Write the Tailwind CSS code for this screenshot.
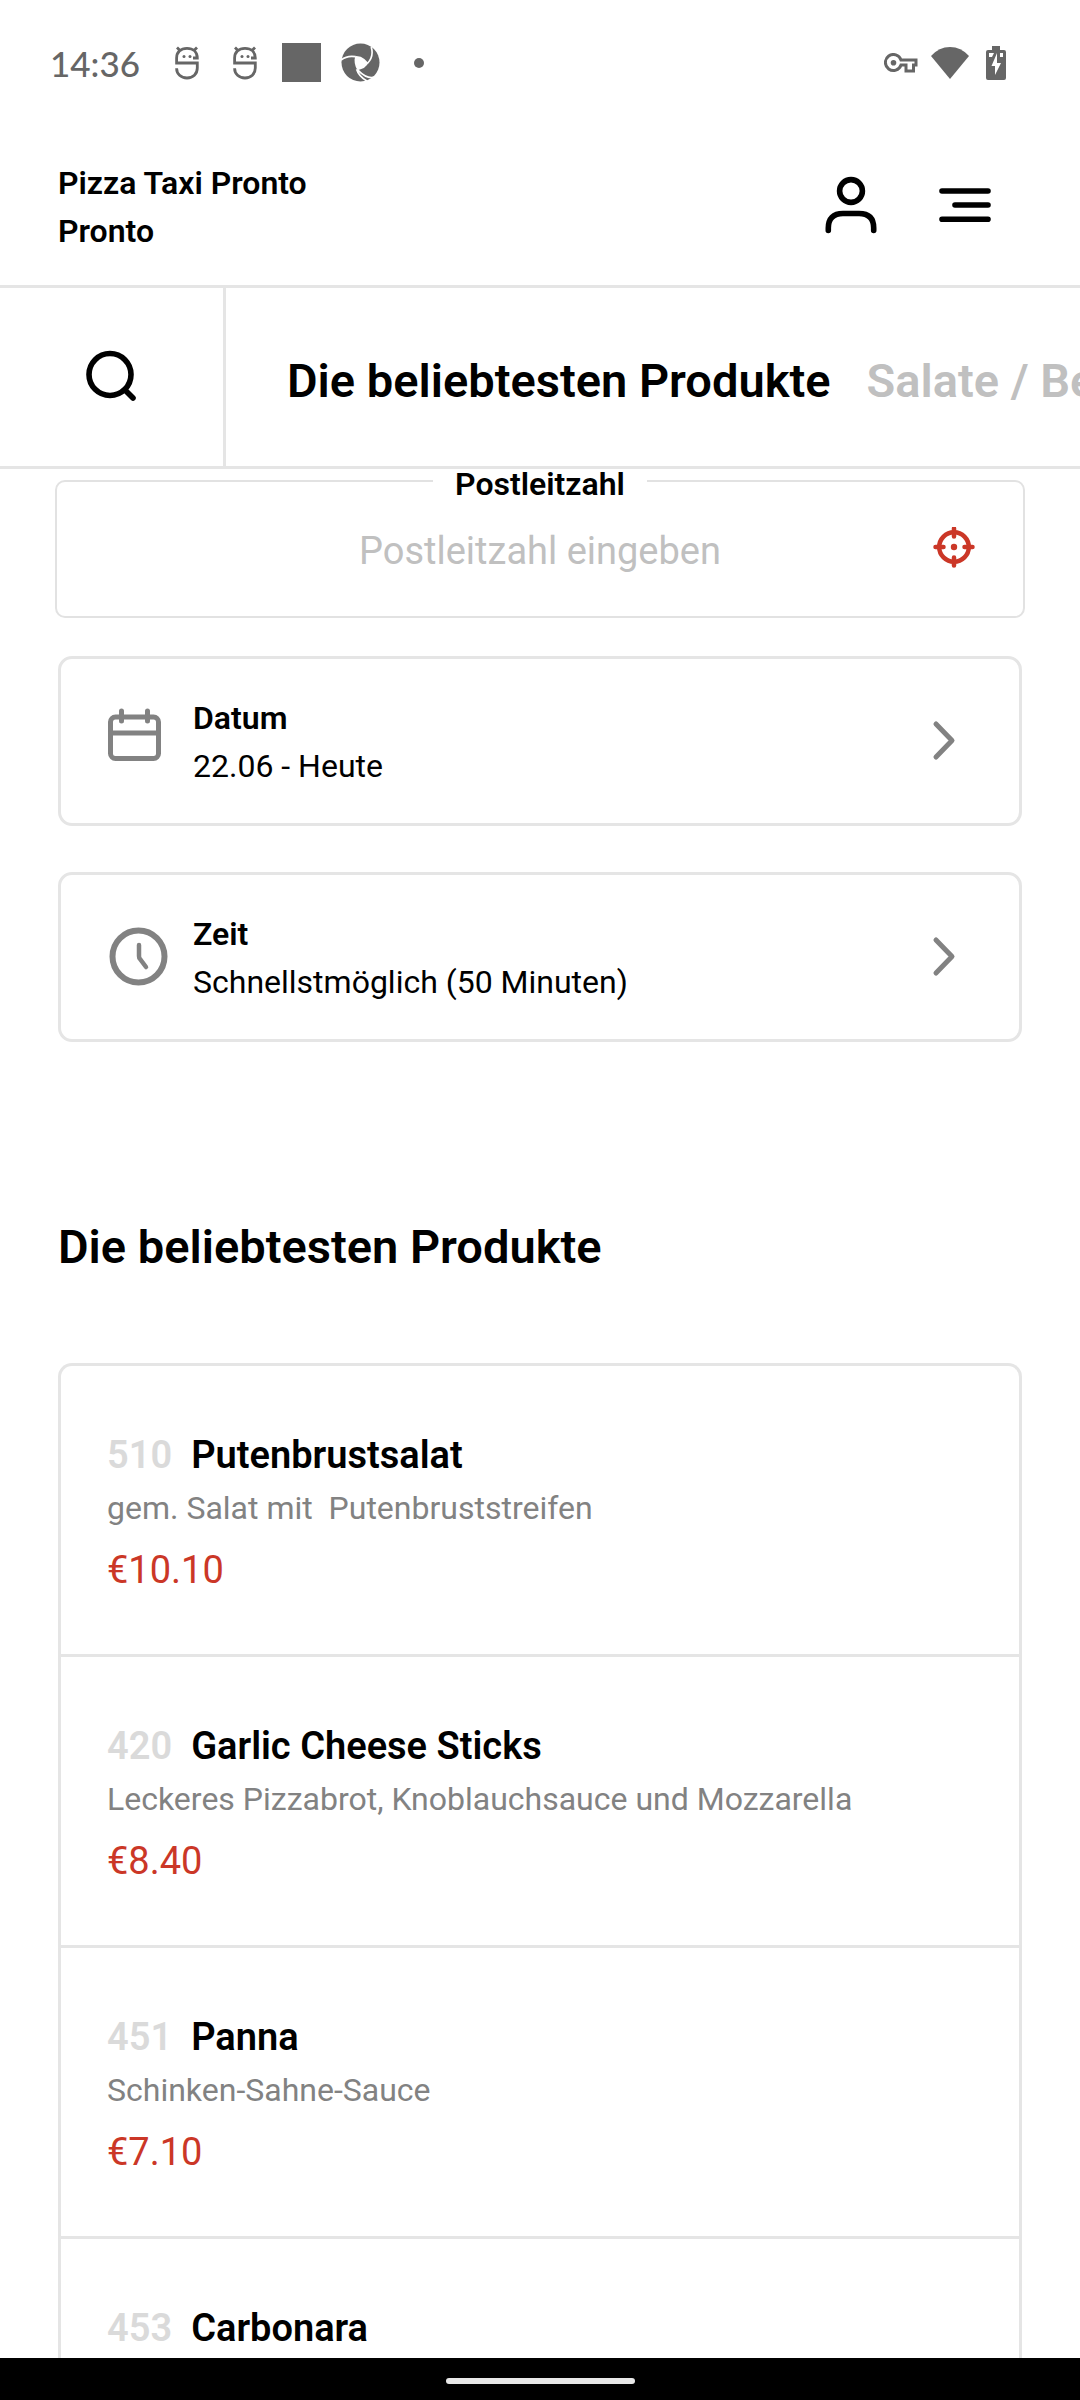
<!DOCTYPE html>
<html lang="de">
<head>
  <meta charset="UTF-8" />
  <meta name="viewport" content="width=device-width, initial-scale=1" />
  <title>Pizza Taxi Pronto</title>
  <script src="https://cdn.jsdelivr.net/npm/@tailwindcss/browser@4"></script>
</head>
<body class="flex h-screen flex-col bg-white font-['Roboto',sans-serif] text-[32px] leading-[48px] text-black">

  <!-- Status bar -->
  <div class="flex h-[125px] shrink-0 items-center justify-between pr-[66px] pl-[50px] text-[#666]">
    <div class="flex items-center">
      <span class="font-['Lato',sans-serif] text-[35px] font-medium">14:36</span>
      <svg class="ml-[34px] h-9 w-7" viewBox="0 0 28 36" fill="none" stroke="currentColor" stroke-width="2.800">
        <path d="M19 13h4.300c0-6-4-9.700-10.300-9.700S2.600 7 2.600 13v5h20.700v5c0 6-4.300 10-10.300 10S2.600 29 2.600 23.300M3 2.500l3 3M23 2.500l-3 3" />
        <circle cx="10" cy="11.500" r="1.500" fill="currentColor" stroke="none" /><circle cx="16" cy="11.500" r="1.500" fill="currentColor" stroke="none" />
      </svg>
      <svg class="ml-[30px] h-9 w-7" viewBox="0 0 28 36" fill="none" stroke="currentColor" stroke-width="2.800">
        <path d="M19 13h4.300c0-6-4-9.700-10.300-9.700S2.600 7 2.600 13v5h20.700v5c0 6-4.300 10-10.300 10S2.600 29 2.600 23.300M3 2.500l3 3M23 2.500l-3 3" />
        <circle cx="10" cy="11.500" r="1.500" fill="currentColor" stroke="none" /><circle cx="16" cy="11.500" r="1.500" fill="currentColor" stroke="none" />
      </svg>
      <span class="ml-[22px] size-[39px] bg-[#666]"></span>
      <svg class="ml-5 size-[39px]" viewBox="0 0 40 40">
        <circle cx="20" cy="20" r="19.500" fill="currentColor" />
        <path d="M14.500 13.500Q20 13 24 16.500L28 20.500Q25.500 26 17 28Q12.500 21 14.500 13.500z" fill="#fff" />
        <path d="M0 17.500Q6 12.500 15 14M31 4q3 10-4 17M16 27q2 7 10.500 12M17 27.500q12 12 20 6" fill="none" stroke="#fff" stroke-width="1.700" />
      </svg>
      <span class="ml-[34px] size-[10px] rounded-full bg-[#666]"></span>
    </div>
    <div class="flex items-center gap-3">
      <svg class="h-5 w-[34px]" viewBox="0 0 34 20" fill="none" stroke="currentColor" stroke-width="3">
        <path d="M17 7H32v5h-2.500v6H22v-6h-5A8 8 0 1 1 17 7z" />
        <circle cx="9.500" cy="9.700" r="2.800" fill="currentColor" stroke="none" />
      </svg>
      <svg class="h-8 w-10" viewBox="0 0 40 32" fill="currentColor"><path d="M1 9Q9 0 20 0t19 9L20 32z" /></svg>
      <svg class="h-[34px] w-8" viewBox="0 0 32 34">
        <path d="M10 0h8v4h4q2 0 2 2v26q0 2-2 2H6q-2 0-2-2V6q0-2 2-2h4z" fill="currentColor" />
        <path d="M15 7v10h4l-6 12v-9H9.500zM7 7h5l-2 4H7zM18 7h3v4h-3z" fill="#fff" />
      </svg>
    </div>
  </div>

  <header class="flex shrink-0 items-center justify-between border-b-3 border-[#e5e5e5] pt-8 pr-[83px] pb-[30px] pl-[58px]">
    <h1 class="pt-[2px] font-semibold">Pizza Taxi Pronto<br />Pronto</h1>
    <div class="flex items-center gap-[50px]">
      <button type="button" aria-label="Konto">
        <svg class="size-16" viewBox="0 0 64 64" fill="none" stroke="currentColor" stroke-width="5.600" stroke-linecap="round">
          <circle cx="32" cy="17" r="11.400" />
          <path d="M9.300 56.500v-2.500Q9.300 39.500 24 39.500h16q14.700 0 14.700 14.500v2.500" />
        </svg>
      </button>
      <button type="button" aria-label="Menü">
        <svg class="size-16" viewBox="0 0 64 64" fill="none" stroke="currentColor" stroke-width="5.600" stroke-linecap="round">
          <path d="M9 17h46M22 31h33M9 45.300h46" />
        </svg>
      </button>
    </div>
  </header>

  <nav class="flex h-[181px] shrink-0 overflow-hidden border-b-3 border-[#e5e5e5]">
    <button type="button" aria-label="Suche" class="flex w-[226px] shrink-0 items-center justify-center border-r-3 border-[#e5e5e5]">
      <svg class="size-14" viewBox="0 0 56 56" fill="none" stroke="currentColor" stroke-width="5.600" stroke-linecap="round">
        <circle cx="26" cy="25.500" r="21" /><path d="M41.500 41.500l7.500 7.500" />
      </svg>
    </button>
    <div class="flex items-center gap-9 pt-2 pl-[61px] text-[47px] font-semibold whitespace-nowrap">
      <a href="#beliebt">Die beliebtesten Produkte</a>
      <a href="#salate" class="text-[#c0c0c0]">Salate / Beilagen</a>
    </div>
  </nav>

  <main class="min-h-0 flex-1 overflow-y-auto [scrollbar-width:none]">
    <fieldset class="mx-[55px] rounded-[10px] border-2 border-[#e2e2e2]">
      <legend class="mx-auto px-[22px] pt-[6px] leading-[18px] font-semibold"><label for="plz">Postleitzahl</label></legend>
      <div class="flex items-center px-11 pb-2">
        <input id="plz" type="text" placeholder="Postleitzahl eingeben" class="h-[115px] min-w-0 flex-1 pl-12 text-center text-[38px] outline-none placeholder:text-[#c0c0c0]" />
        <button type="button" aria-label="Standort bestimmen">
          <svg class="size-12" viewBox="0 0 48 48" fill="none" stroke="#cb3727" stroke-width="4.500" stroke-linecap="round">
            <circle cx="23" cy="20" r="14.800" />
            <path d="M23 1.500v8M23 30.500v8M4.500 20h8M33.500 20h8" />
            <circle cx="23" cy="20" r="3.200" fill="#cb3727" stroke="none" />
          </svg>
        </button>
      </div>
    </fieldset>

    <div class="mx-[58px] mt-[38px] space-y-[46px]">
      <button type="button" class="flex w-full items-center rounded-[14px] border-3 border-[#e5e5e5] pt-[35px] pr-12 pb-[33px] pl-10 text-left">
        <svg class="size-[72px] text-[#828282]" viewBox="0 0 72 72" fill="none" stroke="currentColor" stroke-width="5" stroke-linecap="round">
          <rect x="9.500" y="11" width="48" height="41.500" rx="5" />
          <path d="M10 27h47M20.500 5v10M46.500 5v10" />
        </svg>
        <span class="ml-5 flex-1"><b class="block font-semibold">Datum</b>22.06 - Heute</span>
        <svg class="size-12 text-[#828282]" viewBox="0 0 48 48" fill="none" stroke="currentColor" stroke-width="5" stroke-linecap="round" stroke-linejoin="round"><path d="M13 6l16 16.500-16 16.500" /></svg>
      </button>
      <button type="button" class="flex w-full items-center rounded-[14px] border-3 border-[#e5e5e5] pt-[35px] pr-12 pb-[33px] pl-10 text-left">
        <svg class="size-[72px] text-[#828282]" viewBox="0 0 72 72" fill="none" stroke="currentColor" stroke-width="6" stroke-linecap="round">
          <circle cx="37.500" cy="34.500" r="26" />
          <path d="M38 23v11q0 2 1 3l6 8" stroke-width="4.500" />
        </svg>
        <span class="ml-5 flex-1"><b class="block font-semibold">Zeit</b>Schnellstmöglich (50 Minuten)</span>
        <svg class="size-12 text-[#828282]" viewBox="0 0 48 48" fill="none" stroke="currentColor" stroke-width="5" stroke-linecap="round" stroke-linejoin="round"><path d="M13 6l16 16.500-16 16.500" /></svg>
      </button>
    </div>

    <h2 id="beliebt" class="mx-[58px] mt-[169px] text-[47px] leading-[72px] font-semibold">Die beliebtesten Produkte</h2>

    <ul class="mx-[58px] mt-[80px] divide-y-3 divide-[#e5e5e5] rounded-t-[14px] border-3 border-b-0 border-[#e5e5e5]">
      <li class="px-[46px] pt-[62px] pb-12">
        <h3 class="flex gap-[19px] text-[38px] leading-[54px] font-semibold"><span class="text-[#dadada]">510</span>Putenbrustsalat</h3>
        <p class="leading-[52px] whitespace-pre text-[#828282]">gem. Salat mit  Putenbruststreifen</p>
        <p class="text-[38px] leading-[72px] text-[#cb3727]">€10.10</p>
      </li>
      <li class="px-[46px] pt-[62px] pb-12">
        <h3 class="flex gap-[19px] text-[38px] leading-[54px] font-semibold"><span class="text-[#dadada]">420</span>Garlic Cheese Sticks</h3>
        <p class="leading-[52px] text-[#828282]">Leckeres Pizzabrot, Knoblauchsauce und Mozzarella</p>
        <p class="text-[38px] leading-[72px] text-[#cb3727]">€8.40</p>
      </li>
      <li class="px-[46px] pt-[62px] pb-12">
        <h3 class="flex gap-[19px] text-[38px] leading-[54px] font-semibold"><span class="text-[#dadada]">451</span>Panna</h3>
        <p class="leading-[52px] text-[#828282]">Schinken-Sahne-Sauce</p>
        <p class="text-[38px] leading-[72px] text-[#cb3727]">€7.10</p>
      </li>
      <li class="px-[46px] pt-[62px] pb-12">
        <h3 class="flex gap-[19px] text-[38px] leading-[54px] font-semibold"><span class="text-[#dadada]">453</span>Carbonara</h3>
      </li>
    </ul>
  </main>

  <!-- Gesture bar -->
  <div class="flex h-[42px] shrink-0 items-center justify-center bg-black pt-1">
    <span class="h-[6px] w-[189px] rounded-full bg-[#e8e8e8]"></span>
  </div>

</body>
</html>
